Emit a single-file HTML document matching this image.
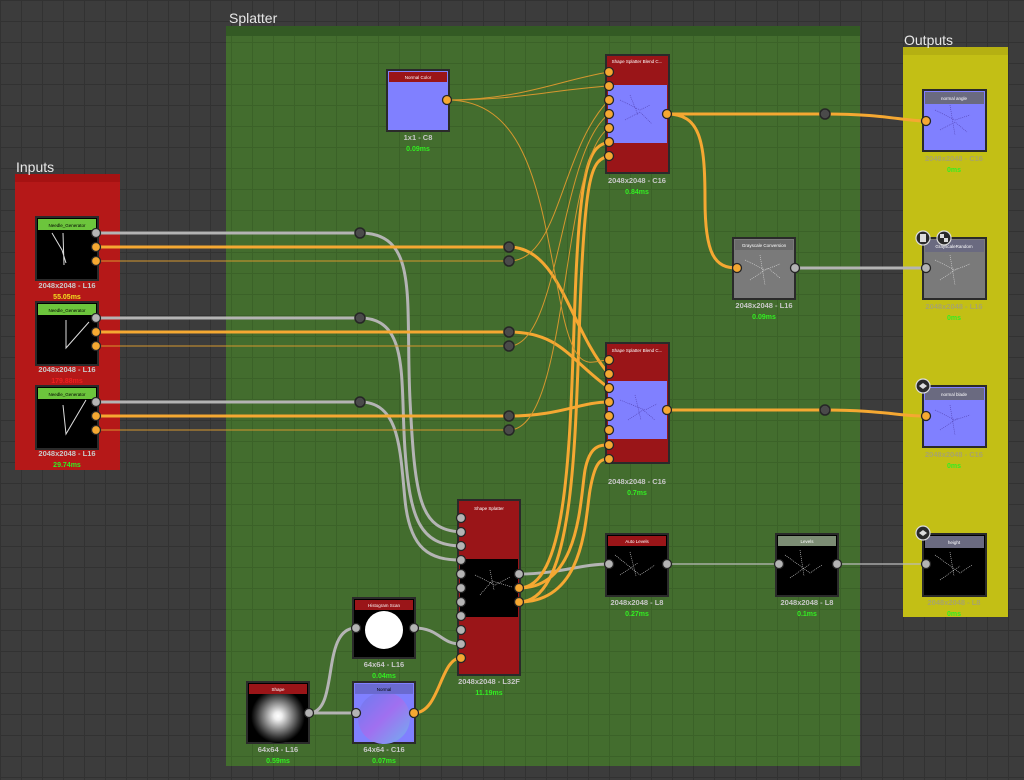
<!DOCTYPE html>
<html><head><meta charset="utf-8"><style>
html,body{margin:0;padding:0;background:#3b3b3b;overflow:hidden}
svg{display:block}
text{font-family:"Liberation Sans",sans-serif}
</style></head><body>
<svg width="1024" height="780" viewBox="0 0 1024 780" xmlns="http://www.w3.org/2000/svg">
<defs>
<pattern id="g" width="21" height="21" patternUnits="userSpaceOnUse"><rect width="21" height="21" fill="#3c3c3c"/><path d="M0 0.5H21M0.5 0V21" stroke="#323232" stroke-width="1"/></pattern>
<pattern id="gg" width="21" height="21" patternUnits="userSpaceOnUse"><rect width="21" height="21" fill="#436d2e"/><path d="M0 0.5H21M0.5 0V21" stroke="#3b6228" stroke-width="1"/></pattern>
<radialGradient id="rg"><stop offset="0" stop-color="#fff"/><stop offset="0.15" stop-color="#eee"/><stop offset="0.8" stop-color="#333"/><stop offset="1" stop-color="#000"/></radialGradient>
<linearGradient id="nl" x1="0" y1="0" x2="1" y2="1"><stop offset="0" stop-color="#6a7cf0"/><stop offset=".5" stop-color="#a070f0"/><stop offset="1" stop-color="#70b0f0"/></linearGradient>
</defs>
<rect width="1024" height="780" fill="url(#g)"/>
<rect x="226" y="26" width="634" height="740" fill="url(#gg)"/>
<rect x="226" y="26" width="634" height="10" fill="#335a24"/>
<text x="229" y="23" fill="#e8e8e8" font-size="14">Splatter</text>
<rect x="15" y="174" width="105" height="296" fill="#b51818"/>
<rect x="15" y="174" width="105" height="8" fill="#a51212"/>
<text x="16" y="172" fill="#e8e8e8" font-size="14">Inputs</text>
<rect x="903" y="47" width="105" height="570" fill="#c3bf15"/>
<rect x="903" y="47" width="105" height="8" fill="#b5b012"/>
<text x="904" y="45" fill="#e8e8e8" font-size="14">Outputs</text>

<g fill="none" stroke-linecap="round">
<g stroke="#b4b4b4" stroke-width="3">
<path d="M96 233H360C420 233 405 300 410 400C415 500 420 530 461 532"/>
<path d="M96 318H360C410 318 400 380 405 450C410 520 420 545 461 546"/>
<path d="M96 402H360C400 402 400 450 405 500C410 550 430 560 461 560"/>
<path d="M309 713C340 713 320 628 356 628"/>
<path d="M309 713H356"/>
<path d="M414 628C440 628 440 644 461 644"/>
<path d="M519 574C560 574 580 564 609 564"/>
<path d="M795 268H923"/>
</g>
<path d="M668 564H838" stroke="#bbbbbb" stroke-width="1.2"/>
<path d="M838 564H923" stroke="#bbbbbb" stroke-width="1.2"/>
<g stroke="#f5a832" stroke-width="3">
<path d="M96 247H509C560 247 570 330 609 374"/>
<path d="M96 332H509C560 332 570 360 609 388"/>
<path d="M96 416H509C560 416 580 402 609 402"/>
<path d="M519 588C570 588 570 430 575 300C580 160 590 146 609 142"/>
<path d="M519 602C575 602 575 440 580 310C585 170 592 160 609 156"/>
<path d="M519 588C580 588 580 500 585 470C590 445 600 445 609 445"/>
<path d="M519 602C585 602 585 520 590 490C595 462 600 459 609 459"/>
<path d="M414 713C440 713 440 658 461 658"/>
<path d="M667 114H825C880 114 900 120 923 121"/>
<path d="M667 114C700 114 705 140 705 200C705 255 715 268 737 268"/>
<path d="M667 410H825C880 410 900 416 923 416"/>
</g>
<g stroke="#d6972e" stroke-width="1">
<path d="M96 261H509C560 261 560 150 609 100"/>
<path d="M96 346H509C560 346 560 150 609 114"/>
<path d="M96 430H509C570 430 560 160 609 128"/>
<path d="M447 100C520 100 560 80 609 72"/>
<path d="M447 100C530 100 540 200 560 300C575 380 590 360 609 360"/>
<path d="M447 100C520 100 550 90 609 86"/>
</g>
</g>
<g fill="#4a4a4a" stroke="#262626" stroke-width="1.5">
<circle cx="360" cy="233" r="5"/><circle cx="509" cy="247" r="5"/><circle cx="509" cy="261" r="5"/>
<circle cx="360" cy="318" r="5"/><circle cx="509" cy="332" r="5"/><circle cx="509" cy="346" r="5"/>
<circle cx="360" cy="402" r="5"/><circle cx="509" cy="416" r="5"/><circle cx="509" cy="430" r="5"/>
<circle cx="825" cy="114" r="5"/><circle cx="825" cy="410" r="5"/>
</g>

<g font-size="4" fill="#fff">
<rect x="36" y="217" width="62" height="63" fill="#000" stroke="#2a2a2a" stroke-width="2"/><rect x="38" y="219" width="58" height="11" fill="#6cc53c"/>
<path d="M52 233L62 250L66 263M63 233L64 265" stroke="#ddd" stroke-width="1" fill="none"/>
<rect x="36" y="302" width="62" height="63" fill="#000" stroke="#2a2a2a" stroke-width="2"/><rect x="38" y="304" width="58" height="11" fill="#6cc53c"/>
<path d="M66 320L66 348L89 322" stroke="#ddd" stroke-width="1" fill="none"/>
<rect x="36" y="386" width="62" height="63" fill="#000" stroke="#2a2a2a" stroke-width="2"/><rect x="38" y="388" width="58" height="11" fill="#6cc53c"/>
<path d="M63 405L66 434L86 400" stroke="#ddd" stroke-width="1" fill="none"/>
<rect x="387" y="70" width="62" height="61" fill="#8080ff" stroke="#2a2a2a" stroke-width="2"/><rect x="389" y="72" width="58" height="10" fill="#9a1518"/>
<rect x="606" y="55" width="63" height="118" fill="#9a1518" stroke="#2a2a2a" stroke-width="2"/><rect x="608" y="85" width="59" height="58" fill="#8080ff"/>
<rect x="606" y="343" width="63" height="120" fill="#9a1518" stroke="#2a2a2a" stroke-width="2"/><rect x="608" y="381" width="59" height="58" fill="#8080ff"/>
<rect x="733" y="238" width="62" height="61" fill="#7a7a7a" stroke="#2a2a2a" stroke-width="2"/><rect x="735" y="240" width="58" height="10" fill="#6a6a6a"/>
<rect x="458" y="500" width="62" height="175" fill="#9a1518" stroke="#2a2a2a" stroke-width="2"/><rect x="460" y="559" width="58" height="58" fill="#000"/>
<rect x="606" y="534" width="62" height="62" fill="#000" stroke="#2a2a2a" stroke-width="2"/><rect x="608" y="536" width="58" height="10" fill="#9a1518"/>
<rect x="776" y="534" width="62" height="62" fill="#000" stroke="#2a2a2a" stroke-width="2"/><rect x="778" y="536" width="58" height="10" fill="#7c8d74"/>
<rect x="353" y="598" width="62" height="60" fill="#000" stroke="#2a2a2a" stroke-width="2"/><rect x="355" y="600" width="58" height="10" fill="#9a1518"/>
<circle cx="384" cy="630" r="19" fill="#fff"/>
<rect x="247" y="682" width="62" height="61" fill="#000" stroke="#2a2a2a" stroke-width="2"/>
<circle cx="278" cy="716" r="27" fill="url(#rg)"/>
<rect x="249" y="684" width="58" height="10" fill="#9a1518"/>
<rect x="353" y="682" width="62" height="61" fill="#8080ff" stroke="#2a2a2a" stroke-width="2"/>
<circle cx="384" cy="718" r="26" fill="url(#nl)"/>
<rect x="355" y="684" width="58" height="10" fill="#6a6ad0"/>
<rect x="923" y="90" width="63" height="61" fill="#8080ff" stroke="#2a2a2a" stroke-width="2"/><rect x="925" y="92" width="59" height="12" fill="#6a6a80"/>
<rect x="923" y="238" width="63" height="61" fill="#7a7a7a" stroke="#2a2a2a" stroke-width="2"/><rect x="925" y="240" width="59" height="12" fill="#6a6a80"/>
<rect x="923" y="386" width="63" height="61" fill="#8080ff" stroke="#2a2a2a" stroke-width="2"/><rect x="925" y="388" width="59" height="12" fill="#6a6a80"/>
<rect x="923" y="534" width="63" height="62" fill="#000" stroke="#2a2a2a" stroke-width="2"/><rect x="925" y="536" width="59" height="12" fill="#6a6a80"/>
<g stroke="#ddd" stroke-width="0.6" fill="none" stroke-dasharray="1 1">
<path d="M475 575l20 10 15-8M480 595l12-14 20 6M490 570l4 20M615 555l25 20 15-10M620 575l18-12M630 552l6 24M785 555l25 18 12-8M790 578l20-14M800 550l4 26M935 555l25 18 12-8M940 580l20-14M950 552l4 24M745 260l20 10 15-6M750 280l18-12 12 10M760 255l5 30M935 260l20 10 15-6M940 280l18-12M950 255l5 30"/>
</g>
<g stroke="#5040b0" stroke-width="0.6" fill="none" stroke-dasharray="1 1"><path d="M620 100l20 10 10-5M625 120l15-8 12 12M630 95l8 20M620 400l25 10 12-6M628 420l15-10 12 10M635 395l6 25M935 110l20 10 15-5M940 130l15-8 12 10M950 105l5 30M935 410l20 10 15-5M940 430l18-12M950 405l5 30"/></g>
<g font-size="4.5" text-anchor="middle" fill="#fff">
<text x="67" y="227" fill="#000">Needle_Generator</text><text x="67" y="312" fill="#000">Needle_Generator</text><text x="67" y="396" fill="#000">Needle_Generator</text>
<text x="418" y="79">Normal Color</text><text x="637" y="63">Shape Splatter Blend C...</text><text x="637" y="352">Shape Splatter Blend C...</text>
<text x="764" y="247">Grayscale Conversion</text><text x="489" y="510">Shape Splatter</text><text x="637" y="543">Auto Levels</text><text x="807" y="543">Levels</text>
<text x="384" y="607">Histogram Scan</text><text x="278" y="691">Shape</text><text x="384" y="691" fill="#000">Normal</text>
<text x="954" y="100">normal angle</text><text x="954" y="248">GrayscaleRandom</text><text x="954" y="396">normal blade</text><text x="954" y="544">height</text>
</g>
</g>
<g stroke="#262626" stroke-width="1.3">
<g fill="#b4b4b4"><circle cx="96" cy="233" r="4.5"/><circle cx="96" cy="318" r="4.5"/><circle cx="96" cy="402" r="4.5"/>
<circle cx="461" cy="518" r="4.5"/><circle cx="461" cy="532" r="4.5"/><circle cx="461" cy="546" r="4.5"/><circle cx="461" cy="560" r="4.5"/><circle cx="461" cy="574" r="4.5"/><circle cx="461" cy="588" r="4.5"/><circle cx="461" cy="602" r="4.5"/><circle cx="461" cy="616" r="4.5"/><circle cx="461" cy="630" r="4.5"/><circle cx="461" cy="644" r="4.5"/>
<circle cx="519" cy="574" r="4.5"/><circle cx="356" cy="628" r="4.5"/><circle cx="414" cy="628" r="4.5"/><circle cx="309" cy="713" r="4.5"/><circle cx="356" cy="713" r="4.5"/>
<circle cx="609" cy="564" r="4.5"/><circle cx="667" cy="564" r="4.5"/><circle cx="779" cy="564" r="4.5"/><circle cx="837" cy="564" r="4.5"/>
<circle cx="795" cy="268" r="4.5"/><circle cx="926" cy="268" r="4.5"/><circle cx="926" cy="564" r="4.5"/></g>
<g fill="#f5a832"><circle cx="96" cy="247" r="4.5"/><circle cx="96" cy="261" r="4.5"/><circle cx="96" cy="332" r="4.5"/><circle cx="96" cy="346" r="4.5"/><circle cx="96" cy="416" r="4.5"/><circle cx="96" cy="430" r="4.5"/>
<circle cx="447" cy="100" r="4.5"/>
<circle cx="609" cy="72" r="4.5"/><circle cx="609" cy="86" r="4.5"/><circle cx="609" cy="100" r="4.5"/><circle cx="609" cy="114" r="4.5"/><circle cx="609" cy="128" r="4.5"/><circle cx="609" cy="142" r="4.5"/><circle cx="609" cy="156" r="4.5"/><circle cx="667" cy="114" r="4.5"/>
<circle cx="609" cy="360" r="4.5"/><circle cx="609" cy="374" r="4.5"/><circle cx="609" cy="388" r="4.5"/><circle cx="609" cy="402" r="4.5"/><circle cx="609" cy="416" r="4.5"/><circle cx="609" cy="430" r="4.5"/><circle cx="609" cy="445" r="4.5"/><circle cx="609" cy="459" r="4.5"/><circle cx="667" cy="410" r="4.5"/>
<circle cx="519" cy="588" r="4.5"/><circle cx="519" cy="602" r="4.5"/><circle cx="461" cy="658" r="4.5"/><circle cx="414" cy="713" r="4.5"/>
<circle cx="737" cy="268" r="4.5"/><circle cx="926" cy="121" r="4.5"/><circle cx="926" cy="416" r="4.5"/></g>
</g>
<g fill="#2a2a2a" stroke="#ddd" stroke-width="1.2"><circle cx="923" cy="238" r="7"/><circle cx="944" cy="238" r="7"/><circle cx="923" cy="386" r="7"/><circle cx="923" cy="533" r="7"/></g>
<g fill="#ddd"><rect x="920" y="234" width="6" height="8"/><rect x="940" y="234" width="4" height="4"/><rect x="944" y="238" width="4" height="4"/><path d="M919 386l4-3 4 3-4 3z"/><path d="M919 533l4-3 4 3-4 3z"/></g>
<g font-size="7.5" text-anchor="middle" fill="#c8c8c8" font-weight="bold">
<text x="67" y="288">2048x2048 - L16</text><text x="67" y="372">2048x2048 - L16</text><text x="67" y="456">2048x2048 - L16</text>
<text x="418" y="140">1x1 - C8</text><text x="637" y="183">2048x2048 - C16</text><text x="637" y="484">2048x2048 - C16</text>
<text x="764" y="308">2048x2048 - L16</text><text x="489" y="684">2048x2048 - L32F</text><text x="637" y="605">2048x2048 - L8</text><text x="807" y="605">2048x2048 - L8</text>
<text x="384" y="667">64x64 - L16</text><text x="278" y="752">64x64 - L16</text><text x="384" y="752">64x64 - C16</text>
<g fill="#a8a46a"><text x="954" y="161">2048x2048 - C16</text><text x="954" y="309">2048x2048 - L16</text><text x="954" y="457">2048x2048 - C16</text><text x="954" y="605">2048x2048 - L8</text></g>
</g>
<g font-size="7" text-anchor="middle" fill="#33ee22" font-weight="bold">
<text x="67" y="299" fill="#f0e020">55.05ms</text><text x="67" y="383" fill="#ee2020">179.88ms</text><text x="67" y="467">29.74ms</text>
<text x="418" y="151">0.09ms</text><text x="637" y="194">0.84ms</text><text x="637" y="495">0.7ms</text><text x="764" y="319">0.09ms</text>
<text x="489" y="695">11.19ms</text><text x="637" y="616">0.27ms</text><text x="807" y="616">0.1ms</text><text x="384" y="678">0.04ms</text>
<text x="278" y="763">0.59ms</text><text x="384" y="763">0.07ms</text>
<text x="954" y="172">0ms</text><text x="954" y="320">0ms</text><text x="954" y="468">0ms</text><text x="954" y="616">0ms</text>
</g>
</svg>
</body></html>
